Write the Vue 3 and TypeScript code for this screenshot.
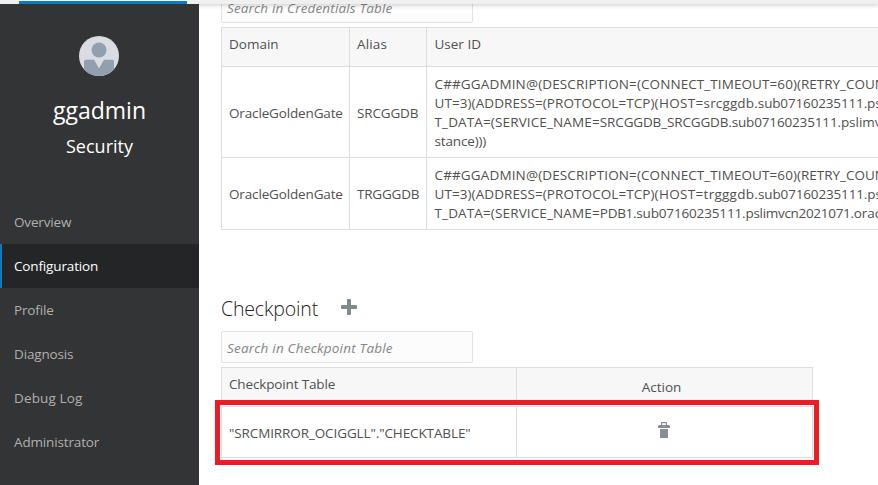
<script setup lang="ts">
interface Segment {
  text: string
  tracking: string
}
interface Credential {
  domain: string
  alias: string
  lines: Segment[][]
}

const navItems: { label: string; tracking: string }[] = [
  { label: 'Overview', tracking: 't-m1' },
  { label: 'Configuration', tracking: 't-m1' },
  { label: 'Profile', tracking: 't-m1' },
  { label: 'Diagnosis', tracking: 't-m1' },
  { label: 'Debug Log', tracking: 't-p1' },
  { label: 'Administrator', tracking: 't-m1' },
]
const active = 'Configuration'

const s = (text: string, tracking = 't-0'): Segment => ({ text, tracking })

const credentials: Credential[] = [
  {
    domain: 'OracleGoldenGate',
    alias: 'SRCGGDB',
    lines: [
      [s('C##GGADMIN@(DESCRIPTION=', 't-p1'), s('(CONNECT_TIMEOUT=60)', 't-p0'), s('(RETRY_COUNT=20)')],
      [s('UT=3)(ADDRESS=(PROTOCOL=TCP)', 't-p0'), s('(HOST=', 't-p3'), s('srcggdb.', 't-p1'), s('sub07160235111.', 't-m1'), s('pslimvcn', 't-0')],
      [s('T_DATA=(SERVICE_NAME=', 't-p1'), s('SRCGGDB_SRCGGDB.', 't-m1'), s('sub07160235111.', 't-m1'), s('pslimvcn', 't-0')],
      [s('stance)))', 't-m1')],
    ],
  },
  {
    domain: 'OracleGoldenGate',
    alias: 'TRGGGDB',
    lines: [
      [s('C##GGADMIN@(DESCRIPTION=', 't-p1'), s('(CONNECT_TIMEOUT=60)', 't-p0'), s('(RETRY_COUNT=20)')],
      [s('UT=3)(ADDRESS=(PROTOCOL=TCP)', 't-p0'), s('(HOST=', 't-p3'), s('trgggdb.', 't-p2'), s('sub07160235111.', 't-m1'), s('pslimvcn', 't-0')],
      [s('T_DATA=(SERVICE_NAME=', 't-p1'), s('PDB1.', 't-m3'), s('sub07160235111.', 't-m1'), s('pslimvcn2021071.', 't-m3'), s('oraclevcn')],
    ],
  },
]
</script>

<template>
  <div class="page">
    <header class="topbar"><span class="progress"></span></header>
    <div class="body">
      <aside class="sidebar">
        <svg class="avatar" viewBox="0 0 40 40" aria-hidden="true">
          <defs><clipPath id="disc"><circle cx="20" cy="20" r="20" /></clipPath></defs>
          <g clip-path="url(#disc)">
            <rect width="40" height="40" fill="#d9dde3" />
            <circle cx="20" cy="14" r="7.5" fill="#929fb0" />
            <path d="M5 25.3Q5 23.7 6.6 23.7H15L20 32.5L25 23.7H33.4Q35 23.7 35 25.3V40H5Z" fill="#929fae" />
          </g>
        </svg>
        <div class="user">ggadmin</div>
        <div class="role">Security</div>
        <nav class="nav">
          <a v-for="n in navItems" :key="n.label" class="nav-item" :class="[n.tracking, { active: n.label === active }]">{{ n.label }}</a>
        </nav>
      </aside>

      <main class="content">
        <div class="search first">Search in Credentials Table</div>
        <table class="grid credentials">
          <thead>
            <tr><th class="c-domain">Domain</th><th class="c-alias t-p1">Alias</th><th class="c-user">User ID</th></tr>
          </thead>
          <tbody>
            <tr v-for="c in credentials" :key="c.alias">
              <td class="t-m1">{{ c.domain }}</td>
              <td class="c-alias" :class="c.alias === 'SRCGGDB' ? 't-m1' : 't-m2'">{{ c.alias }}</td>
              <td class="c-user">
                <div v-for="(line, i) in c.lines" :key="i" class="line"><span v-for="(seg, j) in line" :key="j" :class="seg.tracking">{{ seg.text }}</span></div>
              </td>
            </tr>
          </tbody>
        </table>

        <div class="section-head">
          <h2>Checkpoint</h2>
          <svg class="plus" viewBox="0 0 16 16" aria-hidden="true"><path d="M6.9 0H9.1Q10 0 10 .9V6H15.1Q16 6 16 6.9V9.1Q16 10 15.1 10H10V15.1Q10 16 9.1 16H6.9Q6 16 6 15.1V10H.9Q0 10 0 9.1V6.9Q0 6 .9 6H6V.9Q6 0 6.9 0Z" fill="#82898d" /></svg>
        </div>
        <div class="search">Search in Checkpoint Table</div>
        <div class="checkpoint-wrap">
          <table class="grid checkpoint">
            <thead>
              <tr><th class="c-table t-m1">Checkpoint Table</th><th class="action">Action</th></tr>
            </thead>
            <tbody>
              <tr>
                <td class="c-name">"SRCMIRROR_OCIGGLL"."CHECKTABLE"</td>
                <td class="trash-cell">
                  <svg class="trash" viewBox="0 0 12 16" aria-hidden="true">
                    <path d="M3.5 3.5V1.2Q3.5 .6 4.1 .6H7.9Q8.5 .6 8.5 1.2V3.5" fill="none" stroke="#878f94" stroke-width="1.2" />
                    <path d="M1 3H11L12 4V6H0V4ZM2 7H10V15.2Q10 16 9.2 16H2.8Q2 16 2 15.2Z" fill="#878f94" />
                  </svg>
                </td>
              </tr>
            </tbody>
          </table>
          <div class="highlight"></div>
        </div>
      </main>
    </div>
  </div>
</template>

<style>
body { overflow: hidden; background: #fff; }
</style>

<style scoped>
.page {
  height: 485px;
  display: flex;
  flex-direction: column;
  overflow: hidden;
  font-family: 'Open Sans', 'Noto Sans', sans-serif;
  font-size: 13.5px;
  line-height: 19px;
  color: #505050;
}
.topbar {
  height: 4px;
  flex: none;
  background: #f0f0f0;
  box-shadow: 0 1px 4px rgba(0, 0, 0, 0.22);
  display: flex;
  align-items: flex-end;
  padding-left: 19px;
  position: relative;
}
.progress { width: 168px; height: 3px; background: #0a7cc4; }
.body { display: flex; flex: 1; min-height: 0; }
.sidebar {
  width: 199px;
  flex: none;
  background: #333435;
  color: #fff;
  text-align: center;
  position: relative;
}
.avatar { display: block; width: 40px; height: 40px; margin: 32px 0 0 79px; }
.user { margin-top: 18px; font-size: 23px; line-height: 32px; }
.role { margin-top: 7px; font-size: 18px; line-height: 26px; }
.nav { margin-top: 41px; text-align: left; }
.nav-item {
  display: block;
  height: 44px;
  line-height: 44px;
  padding-left: 14px;
  color: #b0b0b0;
}
.nav-item.active {
  background: #242526;
  color: #fff;
  padding-left: 12px;
  border-left: 2px solid #0a7cc4;
}
.content { flex: 1; min-width: 0; padding-left: 22px; overflow: hidden; }
.search {
  box-sizing: border-box;
  width: 252px;
  height: 32px;
  margin-bottom: 4px;
  padding: 7px 5px 0;
  border: 1px solid #e2e2e2;
  border-radius: 2px;
  background: #fcfcfc;
  color: #858585;
  font-style: italic;
  letter-spacing: 0.2px;
}
.search.first { margin-top: -13px; letter-spacing: 0.15px; }
.grid {
  border-collapse: separate;
  border-spacing: 0;
  border-top: 1px solid #dcdde0;
  border-left: 1px solid #dcdde0;
  table-layout: fixed;
}
.grid th,
.grid td {
  box-sizing: border-box;
  padding: 7px;
  border-right: 1px solid #dcdde0;
  border-bottom: 1px solid #dcdde0;
  text-align: left;
  font-weight: 400;
}
.grid th { height: 39px; background: #f7f7f8; vertical-align: top; }
.grid td { padding: 8px 7px 6px; vertical-align: middle; white-space: nowrap; }
.credentials { width: 760px; }
.c-domain { width: 128px; }
.c-alias { width: 77px; }
.grid .c-user { padding-left: 7.5px; }
.line { height: 19px; }
.section-head { height: 101px; box-sizing: border-box; padding-top: 65px; display: flex; align-items: flex-start; }
h2 { margin: 0; width: 120px; font-size: 19.5px; line-height: 28px; font-weight: 300; color: #222; letter-spacing: -0.15px; }
.plus { width: 16px; height: 16px; margin-top: 4px; }
.checkpoint-wrap { position: relative; }
.checkpoint { width: 592px; }
.c-table { width: 295px; }
.grid .action { text-align: center; padding: 10px 10px 7px 4px; }
.grid .c-name { height: 51px; padding: 9px 7px 7px; letter-spacing: -0.11px; }
.grid .trash-cell { padding: 0; height: 51px; }
.trash { display: block; width: 12px; height: 16px; margin: -4px 0 0 141px; }
.highlight {
  position: absolute;
  left: -6px;
  top: 33px;
  width: 604px;
  height: 65px;
  box-sizing: border-box;
  border: 5px solid #ed1c24;
  box-shadow: inset 0 0 0 1px #fff;
}
.t-0 { letter-spacing: -0.01px; }
.t-m1 { letter-spacing: -0.15px; }
.t-m2 { letter-spacing: -0.2px; }
.t-m3 { letter-spacing: -0.3px; }
.t-p0 { letter-spacing: 0.08px; }
.t-p1 { letter-spacing: 0.14px; }
.t-p2 { letter-spacing: 0.26px; }
.t-p3 { letter-spacing: 0.33px; }
</style>
